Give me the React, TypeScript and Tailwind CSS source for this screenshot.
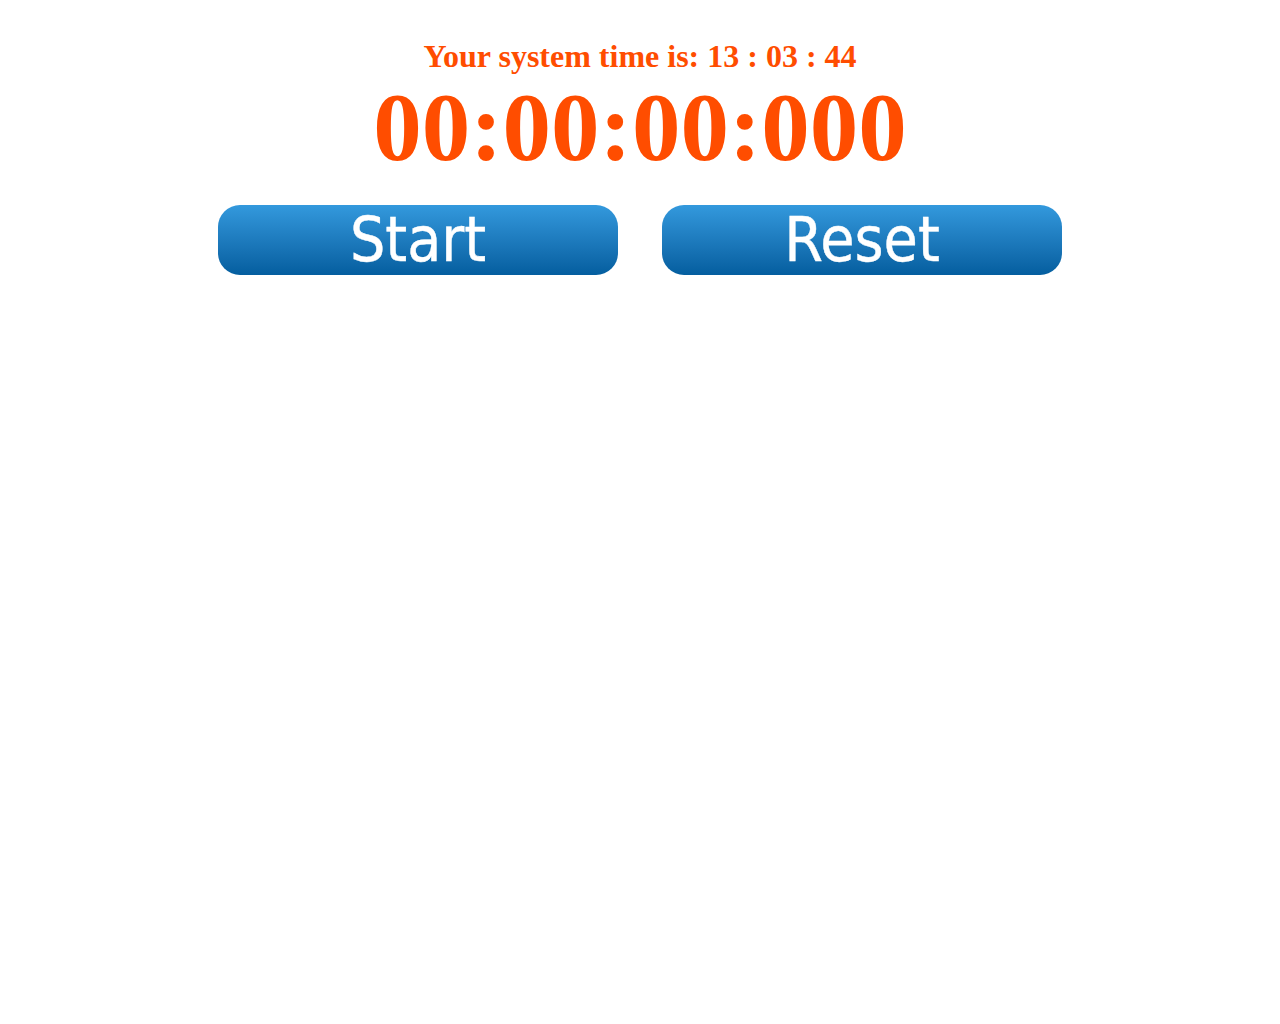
export default function App() {
  const serif = { fontFamily: '"Liberation Serif", "Times New Roman", serif' };
  return (
    <div className="min-h-screen bg-white">
      <div className="flex flex-col items-center pt-[36px]" style={serif}>
        <div className="text-[32px] leading-[40px] font-bold text-[#ff4d00]">Your system time is: 13 : 03 : 44</div>
        <div className="text-[97px] leading-[100px] font-bold text-[#ff4d00] mt-[2px]">00:00:00:000</div>
      </div>
      <div className="flex justify-center gap-[44px] mt-[27px]">
        {['Start', 'Reset'].map((t) => (
          <button
            key={t}
            className="w-[400px] h-[70px] rounded-[22px] bg-gradient-to-b from-[#3399dd] to-[#045e9f] text-white text-[62px] leading-[70px] flex items-center justify-center [-webkit-text-stroke:0.4px_white]"
            style={{ fontFamily: '"DejaVu Sans Condensed", "DejaVu Sans", sans-serif' }}
          >
            {t}
          </button>
        ))}
      </div>
    </div>
  );
}
